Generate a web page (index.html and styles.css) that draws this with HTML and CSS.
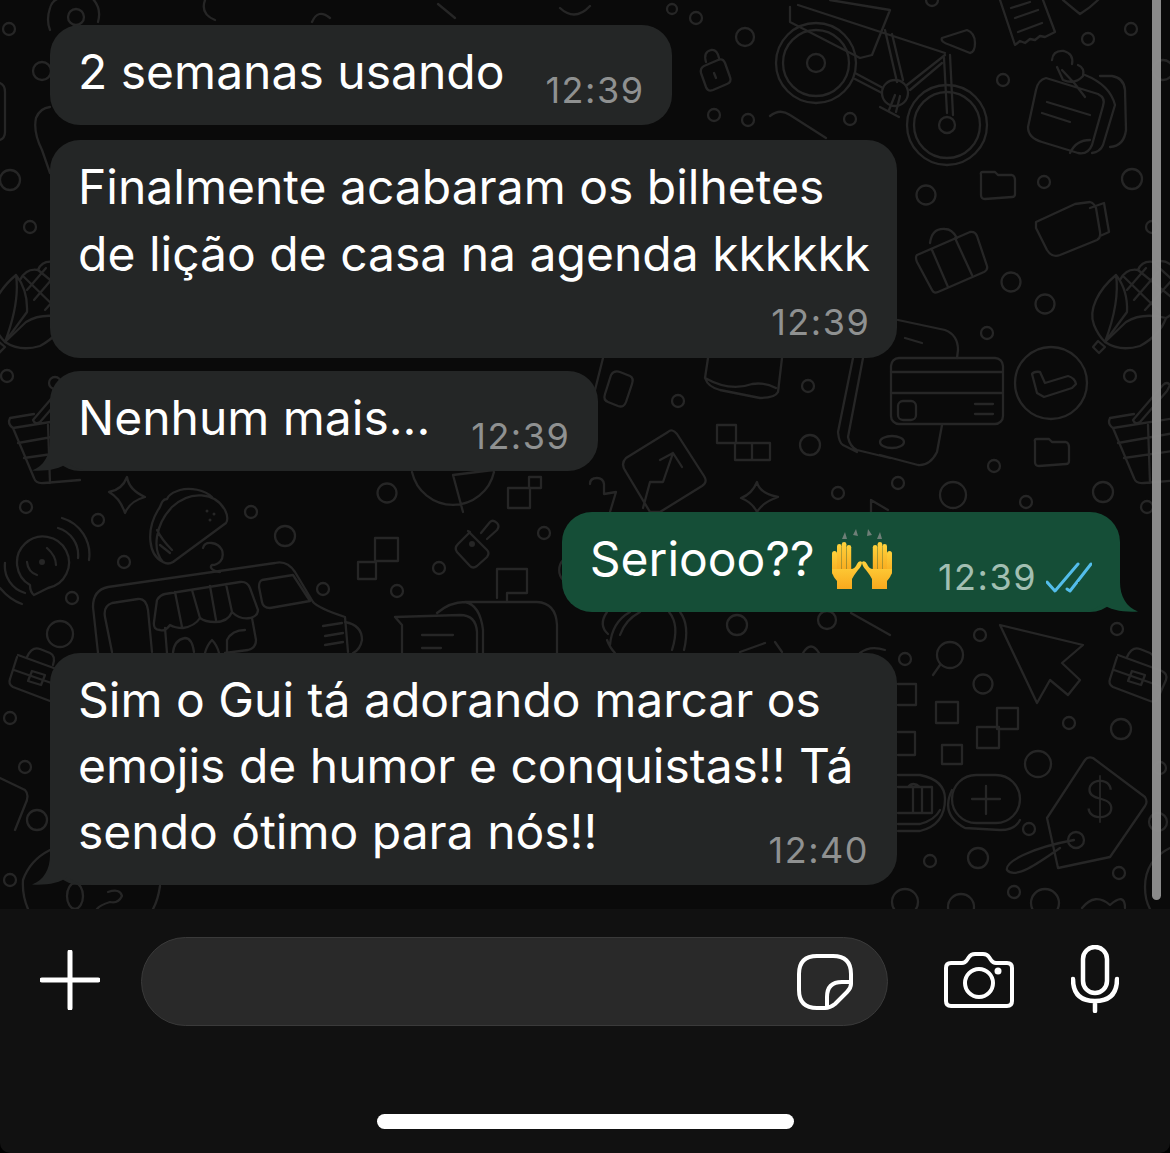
FILE: index.html
```html
<!DOCTYPE html>
<html lang="pt-BR">
<head>
<meta charset="utf-8">
<title>Conversa</title>
<link rel="stylesheet" href="styles.css">
</head>
<body>
<div class="screen">
  <main class="chat">
    <svg class="wallpaper" viewBox="0 0 1170 909" aria-hidden="true">
      <defs>
        <g id="flower">
          <path d="M1116 275C1098 290 1088 310 1094 325Q1098 335 1105 342M1116 275Q1120 302 1105 342M1116 275Q1128 290 1127 312L1105 342"/>
          <path d="M1105 342Q1120 352 1140 346Q1160 335 1166 318Q1142 312 1126 322L1105 342M1098 341L1105 347 1099 353 1093 347Z"/>
          <path d="M1120 280Q1126 268 1138 270Q1142 260 1154 262Q1168 258 1175 270Q1185 285 1178 298Q1178 312 1166 318M1124 277L1160 312M1138 270L1175 300M1154 263L1178 285M1134 300L1158 272M1145 310L1172 280M1127 290L1146 268"/>
        </g>
        <g id="basket">
          <path d="M1110 418Q1107 424 1113 428L1175 418M1113 428L1134 478Q1136 484 1144 483L1180 480M1110 418L1134 414M1118 443L1180 432M1124 458L1180 450M1148 425L1150 483M1133 420L1163 385Q1167 381 1170 385L1167 391 1140 422Q1135 425 1133 420Z"/>
        </g>
        <g id="briefcase">
          <path d="M1118 655L1162 671Q1168 674 1166 680L1158 698Q1156 703 1150 701L1113 687Q1108 684 1110 679L1117 657M1127 657Q1132 646 1140 649L1150 653Q1156 656 1153 665M1114 670L1160 686"/>
          <path d="M1132 671L1145 675 1141 685 1128 681Z"/>
        </g>
        <path id="folder" d="M2 3Q1 0 4 0H16L19 3H33Q36 4 36 8V22Q36 25 33 25L6 27Q2 27 2 23Z"/>
      </defs>

      <!-- bicicleta -->
      <circle cx="816" cy="63" r="40"/><circle cx="816" cy="63" r="33"/><circle cx="816" cy="63" r="9"/>
      <circle cx="947" cy="125" r="40"/><circle cx="947" cy="125" r="33"/><circle cx="947" cy="125" r="8"/>
      <path d="M790 7V22L860 58 872 55 890 10 830 0M798 5L945 53M885 30L897 82M892 34L903 80M945 55L907 85M942 63L910 90M950 55L953 115M944 58L947 113M855 73L883 88M855 79L882 93M942 38L967 30Q975 33 975 43Q975 52 970 53L950 45Q940 42 942 38Z"/>
      <circle cx="895" cy="93" r="13"/>
      <path d="M895 95L889 110M900 96L896 112M880 107L899 117"/>

      <!-- recibo, escudo, bilhete -->
      <path d="M1000 0L1015 45 1020 41 1025 43 1030 39 1035 40 1040 36 1045 37 1055 32 1043 0M1015 18L1038 10M1018 32L1042 23M1011 8L1030 2M1063 0Q1075 10 1080 14Q1090 8 1098 0"/>
      <path d="M1046 78L1098 94Q1106 98 1103 106L1092 145Q1088 155 1078 153L1042 142Q1028 138 1028 127L1036 90Q1038 80 1046 78ZM1047 102L1090 115M1042 113L1070 122M1070 153Q1076 140 1090 140M1062 70L1075 84L1085 97M1052 60Q1053 50 1064 51Q1074 54 1072 64M1057 67L1063 80Q1075 85 1083 76Q1085 68 1078 65M1100 76H1112Q1124 78 1125 90L1126 130Q1124 146 1110 147M1085 75Q1110 85 1115 105L1103 145Q1100 152 1092 153"/>

      <!-- topo -->
      <circle cx="76" cy="17" r="8"/><path d="M50 30Q46 20 50 8Q52 0 60 -2M92 -2Q102 8 98 22"/>
      <circle cx="42" cy="71" r="9"/><circle cx="9" cy="29" r="6"/><circle cx="10" cy="180" r="10"/><circle cx="30" cy="227" r="6"/><circle cx="7" cy="376" r="6"/><circle cx="55" cy="383" r="6"/>
      <path d="M0 83Q5 85 5 92V132Q5 138 0 140M50 107Q40 108 36 118Q33 132 42 150L50 173"/>
      <use href="#flower" x="-1100"/><use href="#flower"/>
      <use href="#basket" x="-1100"/><use href="#basket"/>
      <use href="#briefcase" x="-1100"/><use href="#briefcase"/>

      <circle cx="745" cy="37" r="9"/><circle cx="696" cy="18" r="6"/><circle cx="714" cy="115" r="6"/><circle cx="748" cy="120" r="6"/><circle cx="672" cy="9" r="5"/>
      <path d="M704 66L718 60Q723 58 725 63L730 77Q732 82 727 84L713 90Q708 92 706 87L701 73Q700 68 704 66ZM706 62Q703 52 711 50Q717 49 719 58M714 73L716 78"/>
      <path d="M770 116Q780 108 790 115L826 138M330 18Q318 8 312 22M438 4L455 18M205 0Q200 14 215 20M560 8Q575 22 590 6"/>

      <circle cx="1003" cy="80" r="6"/><circle cx="850" cy="119" r="6"/><circle cx="926" cy="195" r="9.5"/><circle cx="1044" cy="182" r="6"/><circle cx="1132" cy="179" r="10"/><circle cx="1088" cy="39" r="6"/><circle cx="1131" cy="29" r="6"/><circle cx="1163" cy="70" r="10"/><circle cx="932" cy="0" r="6"/>
      <use href="#folder" x="979" y="172"/><use href="#folder" x="1033" y="439"/>

      <!-- mala, filmadora -->
      <path d="M917 255L970 232Q975 231 977 236L987 266Q988 270 984 272L938 292Q934 294 932 290L917 262Q915 257 917 255ZM930 243Q932 228 945 229Q952 229 957 238M932 250L948 287M955 238L972 275"/>
      <path d="M1036 222L1075 204 1090 202Q1094 203 1096 208L1100 232Q1101 238 1097 240L1060 255Q1052 258 1047 250L1036 228ZM1090 208L1104 203 1109 232 1100 236"/>
      <circle cx="1011" cy="282" r="9.5"/><circle cx="1045" cy="304" r="9.5"/><circle cx="987" cy="333" r="6"/><circle cx="1130" cy="376" r="6"/><circle cx="994" cy="466" r="6"/><circle cx="898" cy="483" r="6"/><circle cx="953" cy="495" r="13"/><circle cx="1026" cy="502" r="6"/><circle cx="1103" cy="492" r="10"/><circle cx="1147" cy="507" r="6"/><circle cx="1152" cy="227" r="6"/>

      <!-- cartão e relógio -->
      <circle cx="1051" cy="383" r="36"/>
      <path d="M1032 374Q1034 371 1040 372L1045 383 1068 376Q1075 378 1076 384L1072 388 1044 397 1037 393Z"/>
      <rect x="891" y="358" width="112" height="66" rx="8"/>
      <path d="M891 372H1003M891 393H1003M975 404H993M975 414H993"/>
      <rect x="898" y="401" width="18" height="19" rx="5"/>
      <path d="M898 320L945 330Q958 335 958 350L957 358M942 425L937 452Q930 466 918 465L880 455M863 358L848 437Q850 447 857 450L890 458M853 358L838 432Q839 443 843 445L857 452M905 338L922 343"/>
      <ellipse cx="892" cy="442" rx="12" ry="6"/>

      <!-- meio -->
      <path d="M603 358L590 410M620 372L630 376Q634 378 632 384L626 402Q624 408 618 406L608 402Q603 400 605 394L611 375Q614 370 620 372Z"/>
      <path d="M708 358L705 378Q708 387 720 390L760 398Q775 398 778 392L782 358M705 378Q730 392 752 384Q765 382 776 388"/>
      <circle cx="678" cy="401" r="6"/><circle cx="808" cy="386" r="6"/><circle cx="810" cy="445" r="10"/><circle cx="838" cy="493" r="6"/>
      <path d="M717 425H736V443H717ZM735 443H770V460H735ZM752 443V460"/>
      <path d="M668 432Q672 428 677 434L704 476Q708 482 702 486L660 512H650L626 472Q620 464 626 458ZM643 508L650 482 663 482 673 453M660 460L673 453 682 467"/>
      <path d="M757 482Q759 493 778 497Q763 502 757 512Q752 502 741 498Q752 494 757 482ZM871 512V500L888 510"/>
      <path d="M590 484Q590 478 597 478Q603 478 604 484V494L616 492 610 512"/>

      <!-- radar, taco, food truck -->
      <circle cx="26" cy="507" r="6"/><circle cx="98" cy="520" r="6"/><circle cx="124" cy="562" r="6"/><circle cx="72" cy="598" r="6"/><circle cx="60" cy="634" r="13"/><circle cx="251" cy="512" r="6"/><circle cx="285" cy="536" r="10"/><circle cx="387" cy="493" r="9.5"/><circle cx="323" cy="589" r="6"/>
      <path d="M127 477Q129 490 145 497Q130 501 125 513Q120 498 109 492Q122 490 127 477Z"/>
      <path d="M30 585A26 26 0 1 1 48 588L34 595Q30 592 30 585ZM62 518A38 38 0 0 1 89 560M58 528A28 28 0 0 1 78 558M5 563A28 28 0 0 0 25 593M0 588Q10 600 22 604M47 548Q56 556 56 565M27 562Q28 572 37 575"/>
      <circle class="dot" cx="42" cy="562" r="3"/>
      <path d="M173 562L226 523Q229 518 225 510C215 492 190 490 172 507C155 525 152 550 163 562Q168 565 173 562ZM163 562C148 555 146 530 158 510C162 506 160 500 167 499C170 492 176 492 180 490C190 487 205 490 212 497M157 530Q162 540 172 550M160 545L170 553M203 548C205 540 218 542 222 550C225 560 218 565 212 565C208 568 215 572 220 572"/>
      <circle class="dot" cx="207" cy="511" r="1.5"/><circle class="dot" cx="214" cy="514" r="1.5"/><circle class="dot" cx="210" cy="520" r="1.5"/>
      <path d="M98 653L93 607Q93 590 108 587L275 563Q287 560 295 572L313 602Q318 608 345 617L348 652M112 652L105 617Q103 606 112 603L138 599Q146 598 148 610L152 652M262 580L293 575 310 601 270 608Q263 608 262 602L259 587Q259 581 262 580Z"/>
      <path d="M157 600Q160 595 165 594L240 582Q247 581 250 588L258 610Q258 616 250 618Q240 620 232 612Q228 622 215 622Q205 622 200 618Q195 626 183 628Q175 628 170 625Q165 632 160 630Q153 630 154 622ZM175 592L182 627M192 590L200 618M210 586L216 620M226 584L232 612M165 628L167 653M252 618L256 640Q256 648 248 650L225 653M173 653Q174 640 185 638Q192 638 194 652M205 653Q207 645 212 640Q217 645 219 653M227 653V640Q232 630 245 630"/>
      <path d="M323 626L342 623M325 636L343 633M325 645L343 642M345 622Q362 625 362 640Q360 650 353 653"/>

      <!-- torta, cadeado, quadrados, chat -->
      <path d="M412 472A42 42 0 0 0 494 472M453 475L463 512M453 475L493 470"/>
      <rect x="508" y="488" width="22" height="20"/><rect x="529" y="477" width="12" height="11"/>
      <path d="M468 531L487 550Q490 553 487 557L477 566Q473 569 470 566L457 552Q454 548 458 544L470 532ZM481 533L490 522Q493 519 497 523Q500 526 497 530L487 539"/>
      <circle class="dot" cx="472" cy="544" r="3"/>
      <circle cx="439" cy="568" r="6"/><circle cx="397" cy="591" r="6"/><circle cx="544" cy="533" r="6"/>
      <rect x="375" y="538" width="23" height="23"/><rect x="358" y="562" width="18" height="17"/>
      <path d="M497 598V569H527V593H507V602"/>
      <path d="M395 617L460 615Q476 615 477 632V653M395 617L402 625V653M422 635H453M422 648H441M437 613Q450 602 465 602H537Q556 603 557 625V653M465 602Q480 605 483 630V653"/>
      <path d="M563 560A15 15 0 0 0 563 580"/>
      <path d="M607 612Q598 625 608 634M607 640Q610 648 615 653M669 612Q680 625 672 650M680 612Q690 625 684 650M640 612Q625 620 620 635M630 612Q612 622 610 645"/>
      <circle cx="737" cy="625" r="10"/><circle cx="827" cy="620" r="9"/><path d="M740 652L765 643M775 642L782 652M803 653Q811 640 819 653M851 613L890 635M860 653Q870 645 885 650"/>

      <!-- lado direito inferior -->
      <circle cx="980" cy="635" r="6"/><circle cx="905" cy="659" r="6"/><circle cx="983" cy="684" r="9.5"/><circle cx="1117" cy="629" r="6"/><circle cx="1069" cy="723" r="6"/><circle cx="1121" cy="729" r="10"/><circle cx="1038" cy="764" r="13"/><circle cx="1029" cy="829" r="6"/><circle cx="930" cy="861" r="6"/><circle cx="978" cy="858" r="10"/><circle cx="1119" cy="873" r="6"/><circle cx="1014" cy="892" r="6"/><circle cx="1160" cy="768" r="6"/><circle cx="1158" cy="822" r="9"/><circle cx="905" cy="902" r="13"/><circle cx="961" cy="907" r="13"/><circle cx="1045" cy="903" r="14"/><circle cx="1076" cy="840" r="8"/>
      <circle cx="950" cy="655" r="13"/>
      <path d="M940 665L933 675M1000 625L1083 645 1062 663 1080 680 1068 695 1050 680 1037 703Z"/>
      <rect x="936" y="702" width="22" height="21"/><rect x="977" y="727" width="22" height="21"/><rect x="997" y="708" width="21" height="21"/><rect x="942" y="745" width="20" height="19"/>
      <path d="M898 684H916V705H898M898 732H915V755H898"/>
      <rect x="952" y="775" width="68" height="48" rx="24"/>
      <path d="M972 799H1000M986 786V814M952 790Q940 815 965 828L1000 830Q1015 830 1020 820M898 775H920Q945 780 945 799Q945 825 920 831H898M898 787H932V813H898M908 787Q913 781 920 787M913 787V813M922 787V813M898 824H920Q935 820 940 810"/>
      <path d="M1093 758L1145 797Q1148 802 1145 806L1110 857 1058 868 1047 818 1085 760Q1088 756 1093 758ZM1074 840C1030 848 1005 862 1007 870C1015 880 1040 862 1060 848"/>
      <text class="dollar" x="1100" y="818">$</text>
      <path d="M1082 908Q1095 892 1110 905Q1125 892 1125 908M1170 848Q1145 860 1145 887Q1145 900 1150 909"/>

      <!-- lado esquerdo inferior -->
      <circle cx="25" cy="767" r="6"/><circle cx="37" cy="820" r="10"/><circle cx="10" cy="880" r="6"/><circle cx="10" cy="718" r="6"/>
      <path d="M50 850Q30 860 23 880Q22 895 28 909M160 886Q158 900 153 909M108 892Q120 888 122 896Q118 904 110 902Q100 905 97 909"/>
      <ellipse cx="75" cy="896" rx="8" ry="13"/>
      <path d="M0 778L25 790Q30 795 25 805L15 830"/>
    </svg>

    <article class="bubble in fit first">
      <p class="text">2 semanas usando</p>
      <span class="time">12:39</span>
    </article>

    <article class="bubble in wide stacked">
      <p class="text">Finalmente acabaram os bilhetes<br>de lição de casa na agenda kkkkkk</p>
      <span class="time">12:39</span>
    </article>

    <article class="bubble in fit close">
      <p class="text">Nenhum mais...</p>
      <span class="time">12:39</span>
      <svg class="tail" viewBox="0 0 60 30" aria-hidden="true"><path d="M18 0C18 14 12 25 0 29.5C14 30.5 28 28 36 22C42 27 50 30 60 30V0Z"/></svg>
    </article>

    <article class="bubble out fit">
      <p class="text">Seriooo??
        <svg class="emoji" viewBox="0 0 62 60" role="img" aria-label="🙌">
          <defs>
            <linearGradient id="skin" x1="0" y1="0" x2="0" y2="1">
              <stop offset="0" stop-color="#ffd23c"/><stop offset="1" stop-color="#f8a91d"/>
            </linearGradient>
            <g id="hand">
              <rect x="1" y="22" width="5" height="24" rx="2.5"/>
              <rect x="6" y="15" width="4.6" height="28" rx="2.3"/>
              <rect x="10.8" y="13" width="4.6" height="30" rx="2.3"/>
              <rect x="15.6" y="16" width="4.6" height="26" rx="2.3"/>
              <path d="M1 40H20Q24 40 26 35Q28 31 31 33Q31 37 27 41Q23 46 21 50V60H6V52Q1 47 1 40Z"/>
            </g>
          </defs>
          <path class="spark" d="M11 10L14 3 16 10ZM22 6L25 0 27 7ZM36 7L37 0 41 6ZM46 10L49 3 51 10Z"/>
          <use href="#hand" class="hand"/>
          <use href="#hand" class="hand" transform="translate(62 0) scale(-1 1)"/>
        </svg>
      </p>
      <span class="meta">
        <span class="time">12:39</span>
        <svg class="ticks" viewBox="0 0 46 32" aria-hidden="true"><path d="M1 20L9 29 32 2M21 27L24 29 45 2"/></svg>
      </span>
      <svg class="tail" viewBox="0 0 60 30" aria-hidden="true"><path d="M18 0C18 14 12 25 0 29.5C14 30.5 28 28 36 22C42 27 50 30 60 30V0Z"/></svg>
    </article>

    <article class="bubble in wide overlay far">
      <p class="text">Sim o Gui tá adorando marcar os<br>emojis de humor e conquistas!! Tá<br>sendo ótimo para nós!!</p>
      <span class="time">12:40</span>
      <svg class="tail" viewBox="0 0 60 30" aria-hidden="true"><path d="M18 0C18 14 12 25 0 29.5C14 30.5 28 28 36 22C42 27 50 30 60 30V0Z"/></svg>
    </article>

    <div class="scrollbar"></div>
  </main>

  <footer class="composer">
    <div class="bar">
      <svg class="ico plus" viewBox="0 0 60 60" aria-hidden="true"><path d="M30 2V58M2 30H58"/></svg>
      <div class="input">
        <svg class="ico sticker" viewBox="0 0 56 56" aria-hidden="true"><path d="M20 2H36Q54 2 54 20V30Q54 34 50 38L38 50Q33 54 28 54H20Q2 54 2 36V20Q2 2 20 2ZM53 28H45Q30 28 30 43V53"/></svg>
      </div>
      <svg class="ico camera" viewBox="0 0 70 56" aria-hidden="true"><path d="M7 11H18Q21 11 23 8L25 5Q27 2 31 2H39Q43 2 45 5L47 8Q49 11 52 11H63Q68 11 68 16V49Q68 54 63 54H7Q2 54 2 49V16Q2 11 7 11Z"/><circle cx="35" cy="31" r="14"/><circle class="fill" cx="54" cy="19" r="3.5"/></svg>
      <svg class="ico mic" viewBox="0 0 48 68" aria-hidden="true"><rect x="12" y="2" width="24" height="46" rx="12"/><path d="M2 34Q2 56 24 56Q46 56 46 34M24 56V66"/></svg>
    </div>
    <div class="home"></div>
  </footer>
</div>
</body>
</html>
```

FILE: styles.css
```css
* { box-sizing: border-box; }

html, body { margin: 0; background: #000; }

body { font-family: Inter, "Liberation Sans", sans-serif; }

.screen {
  width: 1170px;
  height: 1153px;
  display: flex;
  flex-direction: column;
  overflow: hidden;
  border-radius: 0 0 10px 10px;
}

.chat {
  position: relative;
  height: 909px;
  padding-top: 25px;
  display: flex;
  flex-direction: column;
  align-items: flex-start;
  background: #0a0a0a;
  overflow: hidden;
}

.wallpaper {
  position: absolute;
  inset: 0;
  width: 1170px;
  height: 909px;
  fill: none;
  stroke: #262626;
  stroke-width: 2.3;
  stroke-linecap: round;
  stroke-linejoin: round;
}

.wallpaper .dot { fill: #262626; stroke: none; }

.wallpaper .dollar {
  font-family: Inter, sans-serif;
  font-size: 52px;
  font-weight: 200;
  fill: #262626;
  stroke: none;
  text-anchor: middle;
}

.bubble {
  position: relative;
  color: #fff;
  border-radius: 30px;
  padding: 14px 28px 19.5px;
}

.in { background: #242626; margin-left: 50px; margin-top: 15px; }
.out { background: #154e37; margin-top: 41px; margin-right: 50px; align-self: flex-end; }

.first { margin-top: 0; }
.close { margin-top: 13px; }
.far { margin-top: 41px; }

.text {
  margin: 0;
  font-size: 48px;
  line-height: 66.5px;
  font-weight: 400;
  white-space: nowrap;
}

.time {
  font-size: 36px;
  line-height: 40px;
  letter-spacing: 1.5px;
  color: #8f9191;
  white-space: nowrap;
  margin-bottom: -4px;
}

.fit { display: flex; align-items: flex-end; gap: 41px; }
.wide { display: grid; width: 847px; }
.stacked { padding-bottom: 20px; }
.stacked .time { justify-self: end; margin-top: 15px; }
.overlay { padding-bottom: 20px; }
.overlay .text { line-height: 66px; }
.overlay .text, .overlay .time { grid-area: 1 / 1; }
.overlay .time { justify-self: end; align-self: end; margin-bottom: -5px; }

.out .time { color: #a2bfb2; }
.out.fit { gap: 45px; }
.meta { display: flex; align-items: flex-end; gap: 9px; margin-bottom: -4px; }
.meta .time { margin-bottom: 0; }

.emoji {
  width: 62px;
  height: 60px;
  margin-left: 3px;
  vertical-align: -11px;
  transform: translateY(2px);
}

.hand { fill: url(#skin); }
.spark { fill: #6f7f78; }

.ticks {
  width: 46px;
  height: 32px;
  margin-bottom: 3px;
  fill: none;
  stroke: #53bdeb;
  stroke-width: 3;
  stroke-linecap: round;
  stroke-linejoin: round;
}

.tail {
  position: absolute;
  left: -18px;
  bottom: 0;
  width: 60px;
  height: 30px;
  fill: #242626;
}

.out .tail {
  left: auto;
  right: -18px;
  transform: scaleX(-1);
  fill: #154e37;
}

.scrollbar {
  position: absolute;
  top: 0;
  left: 1152px;
  width: 9px;
  height: 900px;
  border-radius: 0 0 5px 5px;
  background: #8e8e8e;
  opacity: .97;
}

.composer {
  flex: 1;
  background: #111;
  padding-top: 28px;
  display: flex;
  flex-direction: column;
  align-items: center;
}

.bar {
  display: flex;
  align-items: center;
  width: 100%;
  height: 89px;
  padding-left: 40px;
}

.ico {
  flex: none;
  fill: none;
  stroke: #fff;
  stroke-width: 4.5;
  stroke-linecap: round;
  stroke-linejoin: round;
}

.ico .fill { fill: #fff; stroke: none; }

.plus { width: 60px; height: 60px; stroke-width: 5; margin-bottom: 3px; }

.input {
  width: 747px;
  height: 89px;
  margin-left: 41px;
  padding-right: 34px;
  display: flex;
  align-items: center;
  justify-content: flex-end;
  background: #292929;
  border: 1px solid #3a3a3a;
  border-radius: 45px;
}

.sticker { width: 56px; height: 56px; stroke-width: 4; }
.camera { width: 70px; height: 56px; margin-left: 56px; margin-bottom: 3px; stroke-width: 4; }
.mic { width: 48px; height: 68px; margin-left: 57px; margin-bottom: 5px; }

.home {
  width: 417px;
  height: 15px;
  margin-top: 88px;
  border-radius: 8px;
  background: #fff;
}
```
